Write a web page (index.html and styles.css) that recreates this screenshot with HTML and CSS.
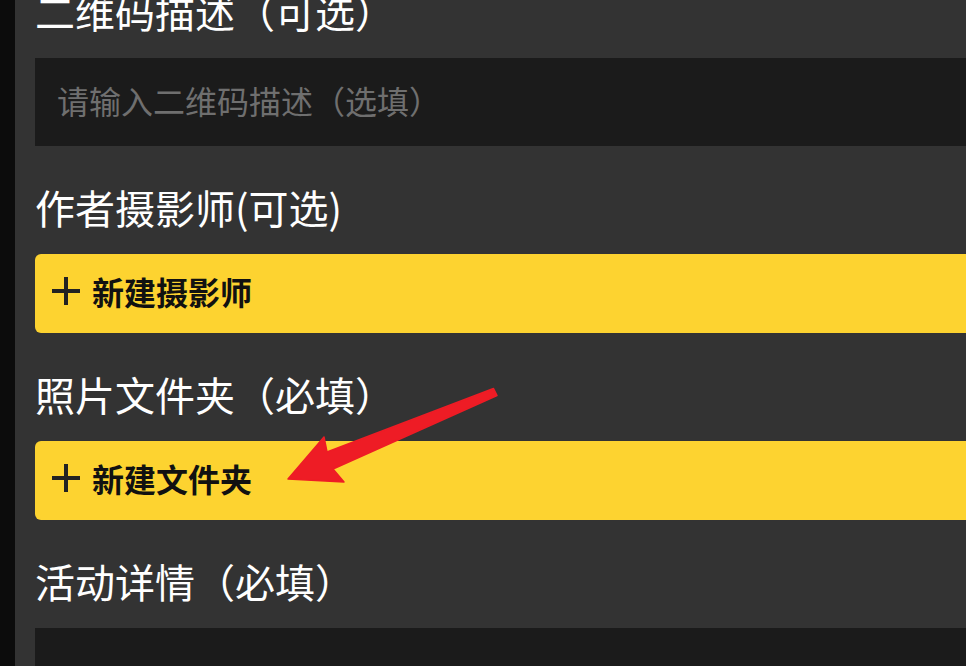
FILE: index.html
```html
<!DOCTYPE html>
<html lang="zh-CN">
<head>
    <meta charset="UTF-8">
    <meta name="viewport" content="width=device-width, initial-scale=1.0">
    <title>新建活动</title>
    <link rel="stylesheet" href="styles.css">
</head>
<body>
    <div class="page">
        <!-- Left edge strip -->
        <div class="edge"></div>

        <!-- Form panel -->
        <div class="panel">
            <div class="form">
                <div class="field">
                    <div class="label">二维码描述（可选）</div>
                    <div class="input">
                        <span class="placeholder">请输入二维码描述（选填）</span>
                    </div>
                </div>

                <div class="field">
                    <div class="label">作者摄影师(可选)</div>
                    <button class="add-btn">
                        <svg class="plus" width="28" height="28" viewBox="0 0 28 28">
                            <path d="M14 0V28M0 14H28" stroke="#222" stroke-width="4" fill="none"/>
                        </svg>
                        <span>新建摄影师</span>
                    </button>
                </div>

                <div class="field">
                    <div class="label">照片文件夹（必填）</div>
                    <button class="add-btn">
                        <svg class="plus" width="28" height="28" viewBox="0 0 28 28">
                            <path d="M14 0V28M0 14H28" stroke="#222" stroke-width="4" fill="none"/>
                        </svg>
                        <span>新建文件夹</span>
                    </button>
                </div>

                <div class="field">
                    <div class="label">活动详情（必填）</div>
                    <div class="textarea"></div>
                </div>
            </div>
        </div>

        <!-- Annotation arrow -->
        <svg class="arrow" width="966" height="666" viewBox="0 0 966 666">
            <path d="M493.5 388.5 L327 452 L324 437 L288 479 L344 482 L333 469 L497 395.5 Z"
                  fill="#ee1c25" stroke="#ee1c25" stroke-width="1.5" stroke-linejoin="round"/>
        </svg>
    </div>
</body>
</html>
```

FILE: styles.css
```css
html, body {
    margin: 0;
    height: 100%;
}

body {
    font-family: "Noto Sans CJK SC", "Noto Sans", sans-serif;
    background-color: #0c0c0c;
    overflow: hidden;
}

.page {
    position: relative;
    display: flex;
    height: 666px;
}

.edge {
    width: 15px;
    flex-shrink: 0;
    background-color: #0c0c0c;
}

.panel {
    flex: 1;
    background-color: #333333;
    padding-left: 20px;
    overflow: hidden;
}

.form {
    margin-top: -13px;
    margin-right: -24px;
}

.field + .field {
    margin-top: 37px;
}

.label {
    font-size: 40px;
    line-height: 48px;
    height: 48px;
    color: #ffffff;
    margin-bottom: 23px;
    white-space: nowrap;
}

.input {
    box-sizing: border-box;
    height: 88px;
    background-color: #1b1b1b;
    display: flex;
    align-items: center;
    padding: 0 0 5px 22px;
}

.placeholder {
    font-size: 32px;
    color: #6f6f6f;
}

.add-btn {
    box-sizing: border-box;
    display: flex;
    align-items: center;
    gap: 12px;
    width: 100%;
    height: 79px;
    padding: 0 0 5px 17px;
    border: none;
    border-radius: 6px;
    background-color: #fdd330;
    font-family: inherit;
    font-size: 32px;
    font-weight: bold;
    color: #111111;
    cursor: pointer;
}

.plus {
    flex-shrink: 0;
}

.textarea {
    height: 120px;
    background-color: #1b1b1b;
}

.arrow {
    position: absolute;
    left: 0;
    top: 0;
    pointer-events: none;
}
```
